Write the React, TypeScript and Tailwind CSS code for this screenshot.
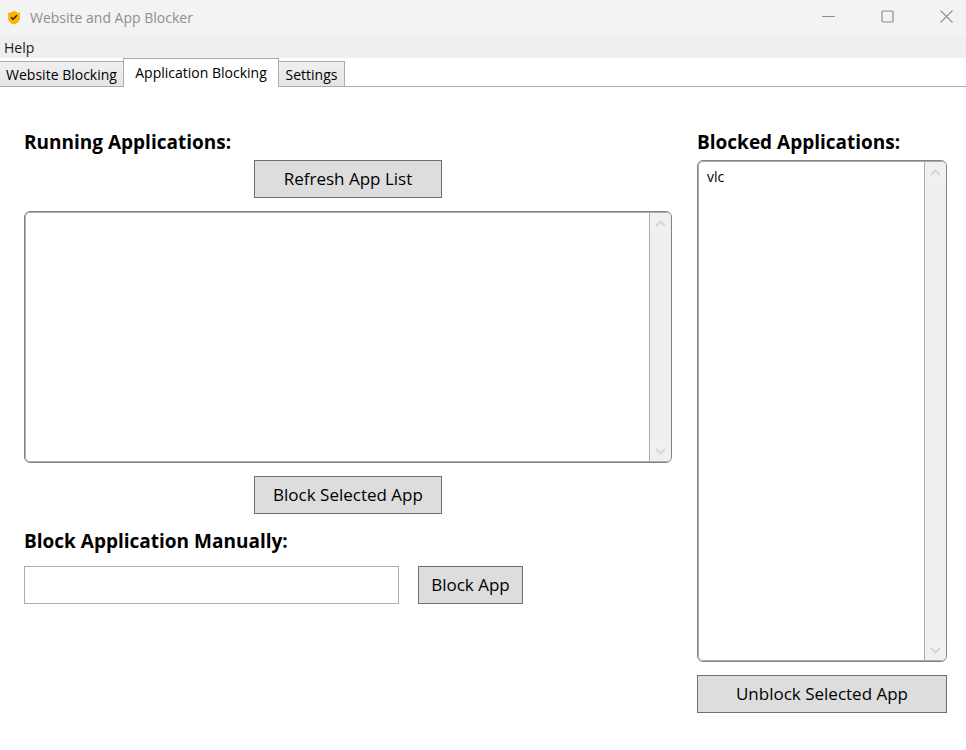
import { useState } from "react";
import type { ReactNode } from "react";

const TABS = [
  { title: "Website Blocking", width: "w-[123px]", edge: "border-l-0 border-r-0" },
  { title: "Application Blocking", width: "w-[156px]", edge: "border-r-0" },
  { title: "Settings", width: "w-[66px]", edge: "border-l-0" },
];

function ShieldIcon() {
  return (
    <svg className="h-4 w-3.5" viewBox="0 0 14 16" aria-hidden="true">
      <path
        d="M7 .5 C5.6 2 3.3 2.8 1 2.8 C.9 4.5 1.5 5 1.1 7 C.5 10.5 3 13 7 14.6 C11 13 13.5 10.5 12.9 7 C12.5 5 13.1 4.5 13 2.8 C10.7 2.8 8.4 2 7 .5 Z"
        fill="#ffb300"
      />
      <path d="M4 7.4 L6 9.2 L10 5.2" fill="none" stroke="#2b2413" strokeWidth="1.5" />
    </svg>
  );
}

function WindowButton({ label, children }: { label: string; children: ReactNode }) {
  return (
    <button type="button" aria-label={label} className="flex w-[59px] items-center justify-center text-[#8f8f8f]">
      <svg className="size-[13px]" viewBox="0 0 13 13" fill="none" stroke="currentColor" aria-hidden="true">
        {children}
      </svg>
    </button>
  );
}

function Chevron({ label, d }: { label: string; d: string }) {
  return (
    <button type="button" aria-label={label} className="flex h-5 items-center justify-center bg-[#f0f0f0]">
      <svg className="h-[7px] w-[11px]" viewBox="0 0 11 7" fill="none" stroke="#d4d4d4" strokeWidth="1.8" aria-hidden="true">
        <path d={d} />
      </svg>
    </button>
  );
}

function ListBox({ label, items, height }: { label: string; items: string[]; height: string }) {
  return (
    <div className={`rounded-md border border-[#828285] ${height}`}>
      <div className="flex h-full overflow-hidden rounded-[5px] border border-r-0 border-[#abadb3]">
        <ul aria-label={label} className="flex-1 px-2 py-[3px] text-sm leading-6">
          {items.map((item) => (
            <li key={item}>{item}</li>
          ))}
        </ul>
        <div className="flex w-[22px] flex-col justify-between border-l border-[#abadb3] bg-[#efefef]">
          <Chevron label="Scroll up" d="M1 6 L5.5 1.5 L10 6" />
          <Chevron label="Scroll down" d="M1 1 L5.5 5.5 L10 1" />
        </div>
      </div>
    </div>
  );
}

function PushButton({ children, className }: { children: ReactNode; className: string }) {
  return (
    <button type="button" className={`h-[38px] border border-[#707070] bg-[#dddddd] text-[17px] ${className}`}>
      {children}
    </button>
  );
}

export default function App() {
  const [active, setActive] = useState(TABS[1].title);
  const [name, setName] = useState("");

  return (
    <div className="min-h-screen bg-white font-['Open_Sans','Noto_Sans',sans-serif] text-black">
      <header className="flex h-9 items-stretch bg-[#f3f3f3]">
        <div className="flex flex-1 items-center gap-[9px] pl-[7px] text-sm text-[#8f8f8f]">
          <ShieldIcon />
          <h1>Website and App Blocker</h1>
        </div>
        <div className="-mr-[10px] flex pb-[3px]">
          <WindowButton label="Minimize">
            <path d="M0 6.5 H13" />
          </WindowButton>
          <WindowButton label="Maximize">
            <rect x="1" y="1" width="11" height="11" rx="1" strokeWidth="1.2" />
          </WindowButton>
          <WindowButton label="Close">
            <path d="M.5 .5 L12.5 12.5 M12.5 .5 L.5 12.5" strokeWidth="1.1" />
          </WindowButton>
        </div>
      </header>

      <nav className="flex h-[22px] items-end bg-[#efefef] px-1 text-sm text-[#212121]">
        <button type="button">Help</button>
      </nav>

      <div role="tablist" className="flex h-[29px] items-end text-sm">
        {TABS.map((tab) => (
          <button
            key={tab.title}
            type="button"
            role="tab"
            aria-selected={tab.title === active}
            onClick={() => setActive(tab.title)}
            className={`${tab.width} ${
              tab.title === active
                ? "h-[29px] border-x border-t border-[#acacac] bg-white"
                : `h-[26px] border border-[#acacac] bg-linear-to-b from-[#f0f0f0] to-[#e5e5e5] pt-px ${tab.edge}`
            }`}
          >
            {tab.title}
          </button>
        ))}
        <div className="flex-1 self-stretch border-b border-[#acacac]" />
      </div>

      <main className="flex gap-[25px] pt-[42px] pr-[19px] pl-6">
        <section className="flex-1">
          <h2 className="h-[31px] text-[19px] leading-[26px] font-bold">Running Applications:</h2>
          <div className="flex flex-col items-center">
            <PushButton className="w-[188px]">Refresh App List</PushButton>
          </div>
          <div className="py-[13px]">
            <ListBox label="Running applications" items={[]} height="h-[252px]" />
          </div>
          <div className="flex flex-col items-center">
            <PushButton className="w-[188px]">Block Selected App</PushButton>
          </div>
          <h2 className="pt-[14px] text-[19px] leading-[26px] font-bold">
            <label htmlFor="app-name">Block Application Manually:</label>
          </h2>
          <form className="flex gap-[19px] pt-3" onSubmit={(e) => e.preventDefault()}>
            <input
              id="app-name"
              type="text"
              value={name}
              onChange={(e) => setName(e.target.value)}
              className="h-[38px] w-[375px] border border-[#abadb3] bg-white px-2 text-[17px] outline-none"
            />
            <PushButton className="w-[105px]">Block App</PushButton>
          </form>
        </section>

        <section className="w-[250px]">
          <h2 className="h-[31px] text-[19px] leading-[26px] font-bold">Blocked Applications:</h2>
          <ListBox label="Blocked applications" items={["vlc"]} height="h-[502px]" />
          <div className="pt-[13px]">
            <PushButton className="w-full">Unblock Selected App</PushButton>
          </div>
        </section>
      </main>
    </div>
  );
}
